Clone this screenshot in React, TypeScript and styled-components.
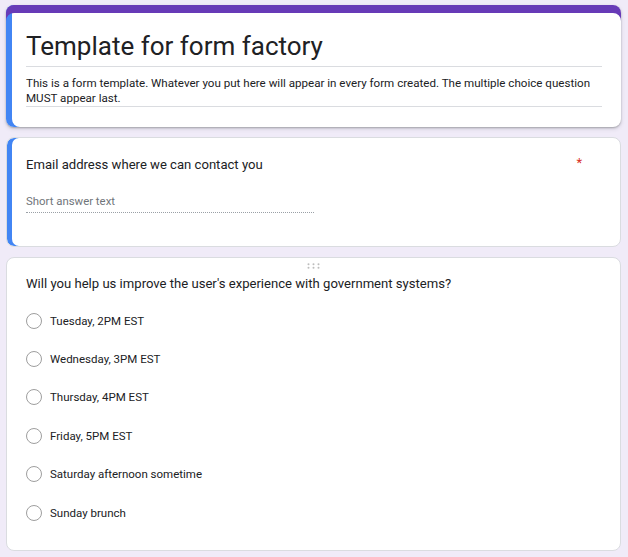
import React from "react";
import styled, { createGlobalStyle } from "styled-components";

const GlobalStyle = createGlobalStyle`
  body {
    margin: 0;
    background: #f0ebf8;
    font-family: Roboto, "Liberation Sans", Arial, sans-serif;
    color: #202124;
  }
`;

const Page = styled.div`
  display: flex;
  flex-direction: column;
  gap: 10px;
  padding: 5px 7px 6px 6px;
`;

const Card = styled.section<{ $accent?: boolean; $header?: boolean }>`
  background: #fff;
  border-radius: 8px;
  border: ${(p) => (p.$header ? "none" : "1px solid #dadce0")};
  box-shadow: ${(p) =>
    [
      p.$header ? "inset 0 8px 0 #673ab7" : "",
      p.$accent ? `inset ${p.$header ? 6 : 5}px 0 0 #4285f4` : "",
      p.$header ? "0 1px 2px rgba(60,64,67,0.35), 0 2px 4px rgba(60,64,67,0.15)" : "",
    ]
      .filter(Boolean)
      .join(", ") || "none"};
  padding: ${(p) => (p.$header ? "23px 19px 20px 20px" : "0 19px 0 19px")};
`;

const Title = styled.h1`
  margin: 0;
  font-family: Roboto, "Open Sans", sans-serif;
  font-weight: 400;
  font-size: 26px;
  line-height: 36px;
  padding-bottom: 2px;
  border-bottom: 1px solid #dadce0;
  color: #202124;
`;

const Description = styled.p`
  margin: 0;
  padding: 9px 0 0;
  font-size: 11.6px;
  line-height: 15px;
  border-bottom: 1px solid #dadce0;
  color: #202124;
`;

const QuestionRow = styled.div<{ $top: number }>`
  display: flex;
  justify-content: space-between;
  align-items: flex-start;
  padding: ${(p) => p.$top}px 19px 0 0;
`;

const QuestionText = styled.div`
  font-size: 13.1px;
  line-height: 20px;
  color: #202124;
`;

const Required = styled.span`
  color: #d93025;
  font-size: 13px;
  line-height: 16px;
`;

const ShortAnswer = styled.div`
  width: 288px;
  margin: 18px 0 33px;
  padding-bottom: 3px;
  font-size: 11.4px;
  line-height: 16px;
  color: #70757a;
  border-bottom: 1px dotted #9aa0a6;
`;

const Handle = styled.div`
  height: 16px;
  display: flex;
  justify-content: center;
  align-items: center;
`;

const Options = styled.ul`
  list-style: none;
  margin: 7.5px 0 0;
  padding: 0 0 18px;
`;

const Option = styled.li`
  display: flex;
  align-items: center;
  gap: 8px;
  height: 38.4px;
  font-size: 11.5px;
  color: #202124;
`;

const Radio = styled.span`
  width: 16px;
  height: 16px;
  box-sizing: border-box;
  border-radius: 50%;
  border: 1.3px solid #9e9e9e;
  flex: none;
`;

const options = [
  "Tuesday, 2PM EST",
  "Wednesday, 3PM EST",
  "Thursday, 4PM EST",
  "Friday, 5PM EST",
  "Saturday afternoon sometime",
  "Sunday brunch",
];

const DragDots = () => (
  <svg width="13" height="6" viewBox="0 0 13 6">
    {[0, 1].map((r) =>
      [0, 1, 2].map((c) => (
        <circle key={`${r}-${c}`} cx={1.5 + c * 5} cy={1.2 + r * 3.6} r="1" fill="#bdbdbd" />
      ))
    )}
  </svg>
);

export default function App() {
  return (
    <>
      <GlobalStyle />
      <Page>
        <Card $header $accent>
          <Title>Template for form factory</Title>
          <Description>
            This is a form template. Whatever you put here will appear in every form created. The
            multiple choice question MUST appear last.
          </Description>
        </Card>

        <Card $accent>
          <QuestionRow $top={17}>
            <QuestionText>Email address where we can contact you</QuestionText>
            <Required>*</Required>
          </QuestionRow>
          <ShortAnswer>Short answer text</ShortAnswer>
        </Card>

        <Card>
          <Handle>
            <DragDots />
          </Handle>
          <QuestionText>Will you help us improve the user's experience with government systems?</QuestionText>
          <Options>
            {options.map((o) => (
              <Option key={o}>
                <Radio />
                {o}
              </Option>
            ))}
          </Options>
        </Card>
      </Page>
    </>
  );
}
